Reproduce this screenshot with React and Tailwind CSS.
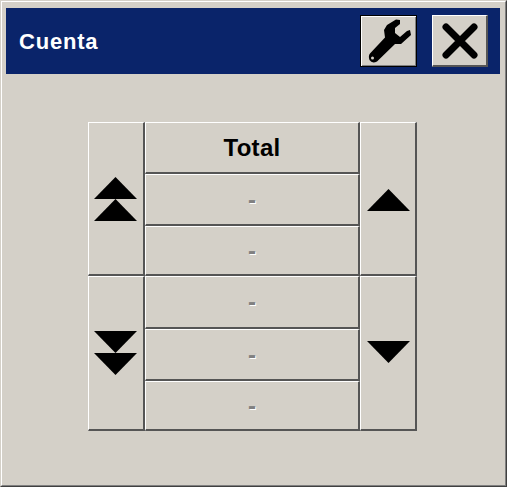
import React from 'react';

const bevel = 'border-t border-l border-r-2 border-b-2 border-t-white border-l-white border-r-[#555555] border-b-[#555555]';

const Triangle = ({ down }) => (
  <svg width="43" height="22" viewBox="0 0 43 22" className="block">
    <polygon points={down ? '0,0 43,0 21.5,22' : '21.5,0 43,22 0,22'} fill="#000" />
  </svg>
);

const SideButton = ({ className, children }) => (
  <button className={`${bevel} flex flex-col items-center justify-center bg-[#d4d0c8] ${className}`}>
    {children}
  </button>
);

const Cell = ({ className, children }) => (
  <div className={`${bevel} flex items-center justify-center bg-[#d4d0c8] ${className}`}>
    {children}
  </div>
);

const Dash = () => (
  <span className="text-[24px] font-bold leading-none text-[#808080] [text-shadow:1px_1px_0_#fff]">-</span>
);

const App = () => {
  return (
    <div className="h-[487px] w-[507px] border-t border-l border-r border-b border-t-[#d4d0c8] border-l-[#d4d0c8] border-r-[#404040] border-b-[#404040] font-['Liberation_Sans',Arial,sans-serif]">
      <div className="h-full w-full border-t border-l border-r border-b border-t-white border-l-white border-r-[#808080] border-b-[#808080] bg-[#d4d0c8]">
        {/* Title bar */}
        <div className="ml-[4px] mr-[5px] mt-[6px] flex h-[66px] items-center bg-[#0a246a] pl-[13px] pr-[12px]">
          <span className="flex-1 text-[22px] font-bold tracking-[0.8px] text-white">Cuenta</span>
          <button className="flex h-[52px] w-[57px] items-center justify-center border border-black bg-[#d4d0c8] shadow-[inset_1px_1px_0_#fff,inset_-1px_-1px_0_#808080]">
            <svg width="52" height="50" viewBox="0 0 52 50" className="block shrink-0">
              <path
                d="M24 9 L33 3.5 L37 4 L37 8 L32 12 L32 17 L37 21 L44 15 L47 14 L48 19 L38 28 L32 28 L14 45.5 Q9 48 6.5 44 Q5 40 7 37.5 L22 21.5 L21 14 Z"
                fill="#000"
              />
              <circle cx="9.5" cy="42" r="1.5" fill="#d4d0c8" />
            </svg>
          </button>
          <button className={`${bevel} ml-[15px] flex h-[52px] w-[56px] items-center justify-center bg-[#d4d0c8]`}>
            <svg width="36" height="36" viewBox="0 0 36 36">
              <path d="M4 4 L32 32 M32 4 L4 32" stroke="#000" strokeWidth="7" strokeLinecap="round" fill="none" />
            </svg>
          </button>
        </div>

        {/* Counter grid */}
        <div className="ml-[86px] mt-[48px] flex w-[329px]">
          <div className="flex w-[57px] flex-col">
            <SideButton className="h-[154px] pr-[1px]">
              <Triangle />
              <Triangle />
            </SideButton>
            <SideButton className="h-[155px] pr-[1px]">
              <Triangle down />
              <Triangle down />
            </SideButton>
          </div>
          <div className="flex w-[215px] flex-col">
            <Cell className="h-[52px] text-[24px] font-bold tracking-[0.3px] text-black">Total</Cell>
            <Cell className="h-[52px]"><Dash /></Cell>
            <Cell className="h-[50px]"><Dash /></Cell>
            <Cell className="h-[53px]"><Dash /></Cell>
            <Cell className="h-[52px]"><Dash /></Cell>
            <Cell className="h-[50px]"><Dash /></Cell>
          </div>
          <div className="flex w-[57px] flex-col">
            <SideButton className="h-[154px] pt-[3px]">
              <Triangle />
            </SideButton>
            <SideButton className="h-[155px] pb-[3px]">
              <Triangle down />
            </SideButton>
          </div>
        </div>
      </div>
    </div>
  );
};

export default App;
